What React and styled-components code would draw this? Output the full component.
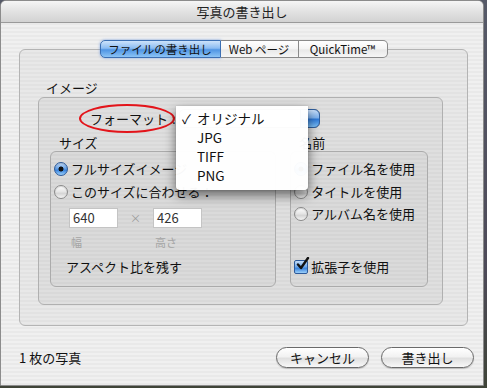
import styled, { createGlobalStyle } from "styled-components";

const GlobalStyle = createGlobalStyle`
    html, body {
        margin: 0;
        padding: 0;
        background: #4b4f5c;
    }
    * {
        box-sizing: border-box;
    }
`

const stripes = (a, b) => `repeating-linear-gradient(to bottom, ${a} 0px, ${a} 2px, ${b} 2px, ${b} 4px)`

export default function App() {
    return (
        <>
            <GlobalStyle />
            <Desktop>
                <Window>
                    <TitleBar>写真の書き出し</TitleBar>
                    <Content>
                        <Tabs>
                            <Tab $active $first>ファイルの書き出し</Tab>
                            <Tab>Web ページ</Tab>
                            <Tab $last>QuickTime™</Tab>
                        </Tabs>
                        <Panel>
                            <GroupLabel>イメージ</GroupLabel>
                            <ImageGroup>
                                <FormatRow>
                                    <FormatLabel>
                                        フォーマット
                                        <Ellipse />
                                    </FormatLabel>
                                    <Colon>:</Colon>
                                    <Popup>
                                        <PopupArrows />
                                        <Menu>
                                            <MenuItem><Check>✓</Check>オリジナル</MenuItem>
                                            <MenuItem>JPG</MenuItem>
                                            <MenuItem>TIFF</MenuItem>
                                            <MenuItem>PNG</MenuItem>
                                        </Menu>
                                    </Popup>
                                </FormatRow>
                                <Columns>
                                    <Column $width={228}>
                                        <SubLabel>サイズ</SubLabel>
                                        <SubGroup>
                                            <OptionRow>
                                                <Radio $on />
                                                <OptionText>フルサイズイメージ</OptionText>
                                            </OptionRow>
                                            <OptionRow>
                                                <Radio />
                                                <OptionText>このサイズに合わせる：</OptionText>
                                            </OptionRow>
                                            <SizeFields>
                                                <Field>
                                                    <Input>640</Input>
                                                    <FieldCaption>幅</FieldCaption>
                                                </Field>
                                                <Times>×</Times>
                                                <Field>
                                                    <Input>426</Input>
                                                    <FieldCaption>高さ</FieldCaption>
                                                </Field>
                                            </SizeFields>
                                            <Aspect>アスペクト比を残す</Aspect>
                                        </SubGroup>
                                    </Column>
                                    <Column $width={139}>
                                        <SubLabel>名前</SubLabel>
                                        <SubGroup>
                                            <OptionRow>
                                                <Radio $on />
                                                <OptionText>ファイル名を使用</OptionText>
                                            </OptionRow>
                                            <OptionRow>
                                                <Radio />
                                                <OptionText>タイトルを使用</OptionText>
                                            </OptionRow>
                                            <OptionRow>
                                                <Radio />
                                                <OptionText>アルバム名を使用</OptionText>
                                            </OptionRow>
                                            <CheckRow>
                                                <Checkbox>
                                                    <svg width="15" height="15" viewBox="0 0 15 15">
                                                        <path d="M3 7.5 L6 11 L13 1" fill="none" stroke="#111" strokeWidth="2.4" strokeLinecap="round" strokeLinejoin="round" />
                                                    </svg>
                                                </Checkbox>
                                                <OptionText>拡張子を使用</OptionText>
                                            </CheckRow>
                                        </SubGroup>
                                    </Column>
                                </Columns>
                            </ImageGroup>
                        </Panel>
                        <Footer>
                            <Count>1 枚の写真</Count>
                            <Buttons>
                                <PushButton>キャンセル</PushButton>
                                <PushButton>書き出し</PushButton>
                            </Buttons>
                        </Footer>
                    </Content>
                </Window>
            </Desktop>
        </>
    )
}

const Desktop = styled.div`
    width: 487px;
    height: 388px;
    background: linear-gradient(to bottom, #565a68 0%, #4d4a58 70%, #3f4438 100%);
    overflow: hidden;
    font-family: "Lucida Grande", "Noto Sans CJK JP", sans-serif;
    color: #111;
`

const Window = styled.div`
    width: 484px;
    height: 386px;
    display: flex;
    flex-direction: column;
    border: 1px solid #8c8c8c;
    border-radius: 6px 6px 0 0;
    overflow: hidden;
    background: ${stripes('#f0f0f0', '#e9e9e9')};
`

const TitleBar = styled.div`
    height: 22px;
    flex-shrink: 0;
    display: flex;
    align-items: center;
    justify-content: center;
    font-size: 13px;
    color: #222;
    background: linear-gradient(to bottom, #f6f6f6 0%, #e2e2e2 50%, #d2d2d2 100%);
    border-bottom: 1px solid #9a9a9a;
`

const Content = styled.div`
    flex: 1;
    display: flex;
    flex-direction: column;
    padding: 17px 9px 0 18px;
`

const Tabs = styled.div`
    position: relative;
    z-index: 2;
    display: flex;
    justify-content: center;
    margin: 0 6px -9px 0;
`

const Tab = styled.div`
    height: 18px;
    display: flex;
    align-items: center;
    justify-content: center;
    font-size: 11.5px;
    color: #111;
    width: ${p => p.$first ? 121 : p.$last ? 89 : 78}px;
    border: 1px solid #8a8a8a;
    border-left: ${p => p.$first ? '1px solid #8a8a8a' : 'none'};
    border-radius: ${p => p.$first ? '5px 0 0 5px' : p.$last ? '0 5px 5px 0' : '0'};
    background: ${p => p.$active
        ? 'linear-gradient(to bottom, #cde3fb 0%, #8cbcf2 45%, #4f95e4 55%, #8cc4f6 100%)'
        : 'linear-gradient(to bottom, #ffffff 0%, #f4f4f4 50%, #e8e8e8 55%, #f6f6f6 100%)'};
    border-color: ${p => p.$active ? '#3b6fb3' : '#8a8a8a'};
    box-shadow: ${p => p.$active ? '0 0 3px rgba(60,120,220,0.6)' : 'none'};
    white-space: nowrap;
`

const Panel = styled.div`
    height: 277px;
    margin-right: 6px;
    padding: 30px 24px 0 18px;
    border: 1px solid #b4b4b4;
    border-radius: 6px;
    background: ${stripes('#e8e8e8', '#e2e2e2')};
`

const GroupLabel = styled.div`
    height: 17px;
    line-height: 16px;
    font-size: 13px;
    padding-left: 8px;
`

const ImageGroup = styled.div`
    height: 208px;
    border: 1px solid #b0b0b0;
    border-radius: 6px;
    background: ${stripes('#dfdfdf', '#d9d9d9')};
    display: flex;
    flex-direction: column;
`

const FormatRow = styled.div`
    display: flex;
    align-items: center;
    padding: 10px 0 0 51px;
    height: 31px;
`

const FormatLabel = styled.span`
    position: relative;
    font-size: 13px;
    line-height: 20px;
`

const Ellipse = styled.span`
    position: absolute;
    left: -11px;
    right: -7px;
    top: -5px;
    bottom: -4px;
    border: 2px solid #e3141a;
    border-radius: 50%;
`

const Colon = styled.span`
    font-size: 13px;
    margin-left: 4px;
    width: 7px;
`

const Popup = styled.div`
    position: relative;
    width: 141px;
    height: 19px;
    border-radius: 5px;
    background: linear-gradient(to bottom, #ffffff, #ececec);
    border: 1px solid #8a8a8a;
`

const PopupArrows = styled.div`
    position: absolute;
    right: -1px;
    top: -1px;
    bottom: -1px;
    width: 20px;
    border-radius: 0 6px 6px 0;
    border: 1px solid #2f5f9f;
    background: linear-gradient(to bottom, #c8dffa 0%, #7fb2ee 45%, #2f7ad8 55%, #7cc0f8 100%);
`

const Menu = styled.div`
    position: absolute;
    z-index: 5;
    left: -4px;
    top: -4px;
    width: 132px;
    height: 84px;
    padding-top: 3px;
    background: rgba(255, 255, 255, 0.97);
    border-radius: 0 0 4px 4px;
    box-shadow: 0 5px 12px rgba(0, 0, 0, 0.55), 0 0 1px rgba(0, 0, 0, 0.4);
`

const MenuItem = styled.div`
    position: relative;
    height: 19px;
    line-height: 19px;
    padding-left: 21px;
    font-size: 13.5px;
    color: #111;
`

const Check = styled.span`
    position: absolute;
    left: 6px;
    font-size: 13px;
`

const Columns = styled.div`
    display: flex;
    gap: 14px;
    padding: 5px 14px 0 11px;
`

const Column = styled.div`
    width: ${p => p.$width}px;
    display: flex;
    flex-direction: column;
`

const SubLabel = styled.div`
    height: 17px;
    line-height: 17px;
    font-size: 13px;
    padding-left: 9px;
`

const SubGroup = styled.div`
    height: 136px;
    border: 1px solid #ababab;
    border-radius: 6px;
    background: ${stripes('#dadada', '#d4d4d4')};
    padding: 6px 0 0 3px;
    display: flex;
    flex-direction: column;
`

const OptionRow = styled.div`
    display: flex;
    align-items: center;
    height: 22.5px;
    gap: 3px;
`

const Radio = styled.span`
    width: 14px;
    height: 14px;
    flex-shrink: 0;
    border-radius: 50%;
    border: 1px solid ${p => p.$on ? '#2d5a9a' : '#8a8a8a'};
    background: ${p => p.$on
        ? 'radial-gradient(circle at 50% 50%, #111 0, #111 2.2px, transparent 2.8px), linear-gradient(to bottom, #c5ddf8 0%, #5d9ce6 50%, #3a83dc 60%, #9cd0fa 100%)'
        : 'linear-gradient(to bottom, #ffffff 0%, #e4e4e4 50%, #d4d4d4 60%, #f4f4f4 100%)'};
    box-shadow: inset 0 1px 1px rgba(0,0,0,0.15);
`

const OptionText = styled.span`
    font-size: 13px;
    line-height: 16px;
    white-space: nowrap;
`

const SizeFields = styled.div`
    display: flex;
    align-items: flex-start;
    padding: 5px 0 0 15px;
`

const Field = styled.div`
    display: flex;
    flex-direction: column;
`

const Input = styled.div`
    width: 49px;
    height: 20px;
    background: #fff;
    border: 1px solid #c4c4c4;
    font-size: 13px;
    line-height: 18px;
    padding-left: 3px;
    color: #333;
`

const FieldCaption = styled.div`
    font-size: 11px;
    color: #a4a4a4;
    padding: 8px 0 0 2px;
    line-height: 13px;
`

const Times = styled.div`
    width: 35px;
    text-align: center;
    font-size: 11px;
    color: #9a9a9a;
    line-height: 20px;
`

const Aspect = styled.div`
    font-size: 13px;
    padding: 8px 0 0 12px;
`

const CheckRow = styled(OptionRow)`
    margin-top: 30px;
`

const Checkbox = styled.span`
    width: 14px;
    height: 14px;
    flex-shrink: 0;
    position: relative;
    border: 1px solid #2d5a9a;
    border-radius: 2px;
    background: linear-gradient(to bottom, #c5ddf8 0%, #6aa5ea 50%, #3a83dc 60%, #9cd0fa 100%);

    svg {
        position: absolute;
        left: 0px;
        top: -4px;
    }
`

const Footer = styled.div`
    flex: 1;
    display: flex;
    align-items: center;
    justify-content: space-between;
    padding: 3px 0 0 0;
`

const Count = styled.div`
    font-size: 13px;
`

const Buttons = styled.div`
    display: flex;
    gap: 12px;
`

const PushButton = styled.div`
    width: 93px;
    height: 21px;
    display: flex;
    align-items: center;
    justify-content: center;
    font-size: 13px;
    border: 1px solid #6a6a6a;
    border-radius: 11px;
    background: linear-gradient(to bottom, #ffffff 0%, #f2f2f2 45%, #e0e0e0 55%, #f8f8f8 100%);
    box-shadow: 0 1px 1px rgba(0,0,0,0.2);
`
